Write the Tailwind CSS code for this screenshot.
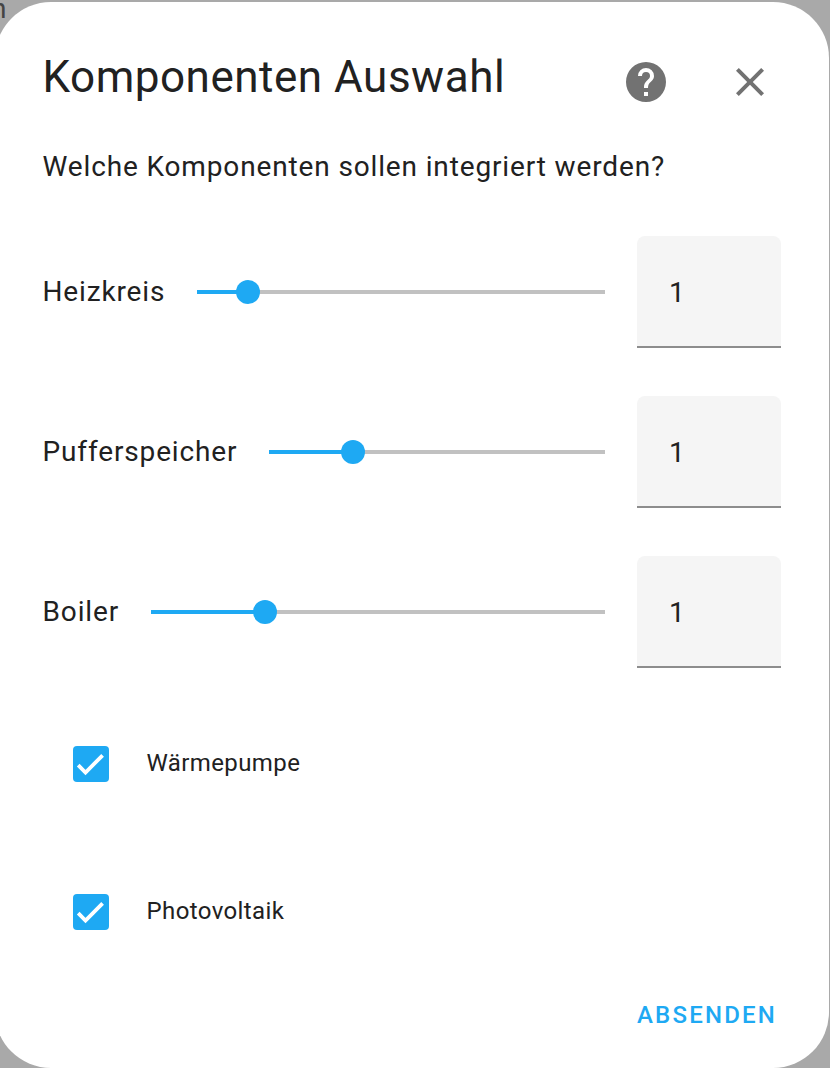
<!DOCTYPE html>
<html lang="de"><head><meta charset="utf-8"><title>Komponenten Auswahl</title>
<script src="https://cdn.jsdelivr.net/npm/@tailwindcss/browser@4"></script></head>
<body class="relative h-[1068px] w-[830px] overflow-hidden bg-[#a9a9a9] pt-[2px] font-['Roboto',sans-serif] text-[#212121]">
<span class="absolute -left-[9px] -top-[7px] text-[28px] leading-8 text-[#444]">n</span>
<main class="relative -ml-[5px] flex h-[1066px] w-[834px] flex-col rounded-[56px] bg-white pr-[48px] pl-[47.5px]">
<header class="flex h-[126px] items-start">
<h1 class="flex-1 pt-[46px] text-[44px] leading-[58px] tracking-[0.52px] whitespace-nowrap">Komponenten Auswahl</h1>
<svg class="mt-[56px] h-12 w-12" viewBox="0 0 24 24" fill="#727272"><path d="M15.07 11.25l-.9.92C13.45 12.89 13 13.5 13 15h-2v-.5c0-1.11.45-2.11 1.17-2.83l1.24-1.26c.37-.36.59-.86.59-1.41a2 2 0 0 0-4 0H8a4 4 0 0 1 8 0c0 .88-.36 1.67-.93 2.25M13 19h-2v-2h2M12 2a10 10 0 1 0 0 20 10 10 0 0 0 0-20"/></svg>
<svg class="mt-[56px] mr-[7px] ml-14 h-12 w-12" viewBox="0 0 24 24" fill="#727272"><path d="M19 6.41 17.59 5 12 10.59 6.41 5 5 6.41 10.59 12 5 17.59 6.41 19 12 13.41 17.59 19 19 17.59 13.41 12z"/></svg>
</header>
<p class="mt-[19px] h-[89px] text-[28px] leading-10 tracking-[0.86px]">Welche Komponenten sollen integriert werden?</p>
<section class="flex flex-col gap-12 text-[28px] tracking-[0.86px]">
<div class="flex h-28 items-center"><label class="w-[154.5px]">Heizkreis</label><div class="flex w-[408px] items-center"><div class="h-1 w-[51px] bg-[#1ea9f3]"></div><div class="z-10 -mx-3 size-6 rounded-full bg-[#1ea9f3]"></div><div class="h-1 flex-1 bg-[#c1c1c1]"></div></div><div class="ml-8 flex h-28 w-36 items-center rounded-t-lg border-b-2 border-[#8d8d8d] bg-[#f5f5f5] pt-[3px] pl-8">1</div></div>
<div class="flex h-28 items-center"><label class="w-[226.5px]">Pufferspeicher</label><div class="flex w-[336px] items-center"><div class="h-1 w-[84px] bg-[#1ea9f3]"></div><div class="z-10 -mx-3 size-6 rounded-full bg-[#1ea9f3]"></div><div class="h-1 flex-1 bg-[#c1c1c1]"></div></div><div class="ml-8 flex h-28 w-36 items-center rounded-t-lg border-b-2 border-[#8d8d8d] bg-[#f5f5f5] pt-[3px] pl-8">1</div></div>
<div class="flex h-28 items-center"><label class="w-[108.5px]">Boiler</label><div class="flex w-[454px] items-center"><div class="h-1 w-[114px] bg-[#1ea9f3]"></div><div class="z-10 -mx-3 size-6 rounded-full bg-[#1ea9f3]"></div><div class="h-1 flex-1 bg-[#c1c1c1]"></div></div><div class="ml-8 flex h-28 w-36 items-center rounded-t-lg border-b-2 border-[#8d8d8d] bg-[#f5f5f5] pt-[3px] pl-8">1</div></div>
</section>
<section class="mt-[78px] flex flex-col gap-28 pl-[30.5px] text-[24px] tracking-[0.4px]">
<div class="flex h-9 items-center"><svg class="size-9 rounded bg-[#1ea9f3]" viewBox="0 0 36 36" fill="none" stroke="white" stroke-width="3.8"><path d="M5.2 19.2l7.3 7.3L29.6 9.3"/></svg><span class="ml-[37.5px] pb-[2px]">Wärmepumpe</span></div>
<div class="flex h-9 items-center"><svg class="size-9 rounded bg-[#1ea9f3]" viewBox="0 0 36 36" fill="none" stroke="white" stroke-width="3.8"><path d="M5.2 19.2l7.3 7.3L29.6 9.3"/></svg><span class="ml-[37.5px] pb-[2px]">Photovoltaik</span></div>
</section>
<button class="mt-[65px] mr-[4px] self-end text-[24px] leading-10 font-medium tracking-[2.2px] text-[#1ea9f3]">ABSENDEN</button>
</main>
</body></html>
